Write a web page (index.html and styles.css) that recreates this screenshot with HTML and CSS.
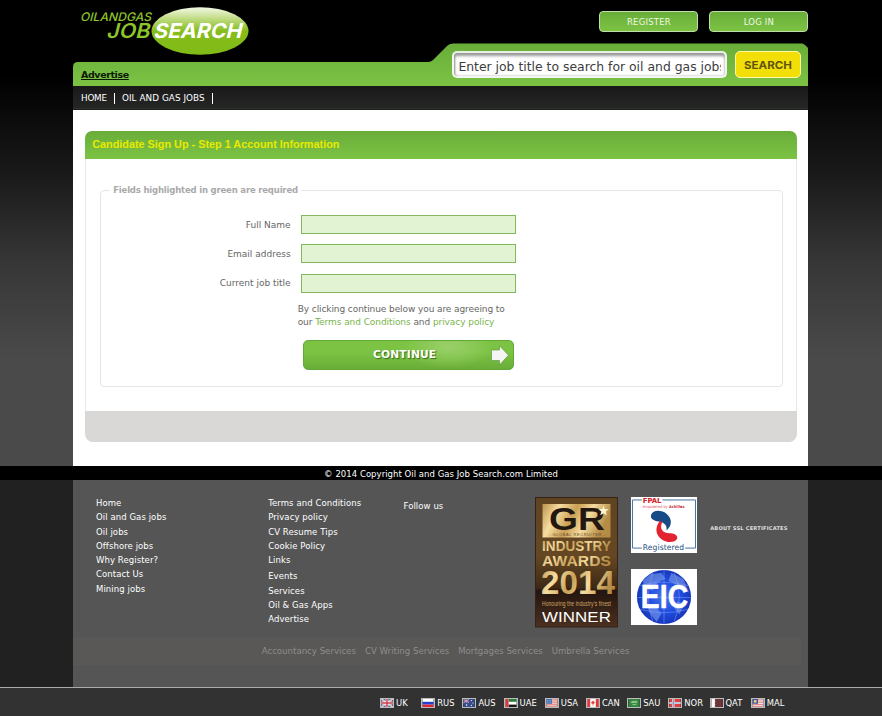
FILE: index.html
```html
<!DOCTYPE html>
<html lang="en">
<head>
<meta charset="utf-8">
<title>Candidate Sign Up - Oil and Gas Job Search</title>
<link rel="stylesheet" href="styles.css">
</head>
<body>
<div class="upper">
  <div class="wrap">
    <header class="header">
      <svg class="header-shape" viewBox="0 0 735 110" width="735" height="110">
        <defs>
          <linearGradient id="hg" x1="0" y1="0" x2="0" y2="1"><stop offset="0" stop-color="#69ad39"/><stop offset="1" stop-color="#7cc344"/></linearGradient>
          <linearGradient id="nav" x1="0" y1="0" x2="0" y2="1"><stop offset="0" stop-color="#191919"/><stop offset="1" stop-color="#252725"/></linearGradient>
        </defs>
        <path d="M0 86V67Q0 62 5 62H355Q358 62 360 60L374 46Q376 43.500 380 43.500H729Q731 43.500 735 48V86Z" fill="url(#hg)"/>
        <rect y="86" width="735" height="23" fill="url(#nav)"/>
        <rect y="108.500" width="735" height="1" fill="#3a3a3a"/>
      </svg>
      <div class="top">
        <svg class="logo" viewBox="0 0 180 60" width="180" height="60">
          <defs><linearGradient id="lg" x1="0" y1="0" x2="0" y2="1"><stop offset="0" stop-color="#f3f8e6"/><stop offset=".15" stop-color="#d3e7a8"/><stop offset=".5" stop-color="#86bd1c"/><stop offset="1" stop-color="#80bb16"/></linearGradient></defs>
          <ellipse cx="127" cy="31" rx="48.500" ry="23.700" fill="url(#lg)"/>
          <g class="logo-text">
            <text class="small" transform="translate(7 20.500) skewX(-14)" font-size="11.800" textLength="71" lengthAdjust="spacingAndGlyphs">OILANDGAS</text>
            <text transform="translate(33 38) skewX(-14)" font-size="20.500" textLength="43" lengthAdjust="spacingAndGlyphs">JOB</text>
            <text class="white" transform="translate(80 38) skewX(-14)" font-size="20.500" textLength="88" lengthAdjust="spacingAndGlyphs">SEARCH</text>
          </g>
        </svg>
        <div class="account"><a class="pill">REGISTER</a><a class="pill">LOG IN</a></div>
      </div>
      <div class="search-row">
        <a class="advertise">Advertise</a>
        <div class="search"><div class="query"><span>Enter job title to search for oil and gas jobs</span></div><a class="go"><svg width="66" height="26" viewBox="0 0 66 26"><text x="8" y="16.800" textLength="48" lengthAdjust="spacingAndGlyphs">SEARCH</text></svg></a></div>
      </div>
      <nav class="nav"><a>HOME</a><a>OIL AND GAS JOBS</a></nav>
    </header>
    <main class="main">
      <section class="panel">
        <h1>Candidate Sign Up - Step 1 Account Information</h1>
        <div class="panel-body">
          <fieldset>
            <legend>Fields highlighted in green are required</legend>
            <label><span>Full Name</span><input></label>
            <label><span>Email address</span><input></label>
            <label><span>Current job title</span><input></label>
            <p>By clicking continue below you are agreeing to<br><span class="line2">our <a>Terms and Conditions</a> and <a>privacy policy</a></span></p>
            <button type="button">CONTINUE<svg width="18" height="21" viewBox="0 0 18 21"><path d="M.5 5H8.500V.8L17.500 10.200 8.500 20V15.500H.5Z" fill="#f5f5f5" stroke="#558f31" stroke-width=".6"/></svg></button>
          </fieldset>
        </div>
        <div class="panel-foot"></div>
      </section>
    </main>
  </div>
</div>
<div class="copyright">© 2014 Copyright Oil and Gas Job Search.com Limited</div>
<footer class="footer">
  <div class="foot">
    <div class="columns">
      <ul class="first"><li>Home</li><li>Oil and Gas jobs</li><li>Oil jobs</li><li>Offshore jobs</li><li>Why Register?</li><li>Contact Us</li><li>Mining jobs</li></ul>
      <ul class="second"><li>Terms and Conditions</li><li>Privacy policy</li><li>CV Resume Tips</li><li>Cookie Policy</li><li>Links</li><li class="gap">Events</li><li>Services</li><li>Oil &amp; Gas Apps</li><li>Advertise</li></ul>
      <div class="follow">Follow us</div>
      <svg class="award" width="83" height="131" viewBox="0 0 83 131">
        <defs>
          <linearGradient id="ab" x1="0" y1="0" x2="0" y2="1"><stop offset="0" stop-color="#604321"/><stop offset=".45" stop-color="#654823"/><stop offset=".7" stop-color="#3e2815"/><stop offset=".72" stop-color="#24150f"/><stop offset="1" stop-color="#4b3020"/></linearGradient>
          <linearGradient id="gold" x1="0" y1="0" x2="1" y2=".25"><stop offset="0" stop-color="#bd934e"/><stop offset=".25" stop-color="#f6dda0"/><stop offset=".5" stop-color="#c99f55"/><stop offset=".72" stop-color="#f5dc9f"/><stop offset="1" stop-color="#b58c46"/></linearGradient>
        </defs>
        <rect x=".5" y=".5" width="82" height="129.500" fill="url(#ab)" stroke="#342317"/>
        <rect x="7.500" y="7" width="68" height="33.500" fill="url(#gold)"/>
        <g font-family="Liberation Sans">
          <text x="14" y="33" font-size="31" font-weight="bold" fill="#23180f" textLength="56" lengthAdjust="spacingAndGlyphs">GR</text>
          <path d="M68.500 8.500l1.200 3.500 4 .2-3 2.300 1 3.800-3.200-2.100-3.300 2.100 1.100-3.800-3-2.300 4-.2z" fill="#fff3cc"/>
          <text x="14" y="39" font-size="4" fill="#654a27" textLength="56">- GLOBAL RECRUITER -</text>
          <text x="7" y="54" font-size="14" font-weight="bold" fill="url(#gold)" textLength="69" lengthAdjust="spacingAndGlyphs">INDUSTRY</text>
          <text x="7" y="68.500" font-size="15" font-weight="bold" fill="url(#gold)" textLength="69" lengthAdjust="spacingAndGlyphs">AWARDS</text>
          <text x="6" y="97" font-size="33" font-weight="bold" fill="url(#gold)" textLength="74" lengthAdjust="spacingAndGlyphs">2014</text>
          <text x="7" y="109" font-size="6.500" fill="#d3a764" textLength="69" lengthAdjust="spacingAndGlyphs">Honouring the industry's finest</text>
          <text x="7" y="125" font-size="14" fill="#fff" textLength="69" lengthAdjust="spacingAndGlyphs">WINNER</text>
        </g>
      </svg>
      <div class="badges">
        <svg width="66" height="56" viewBox="0 0 67 57" preserveAspectRatio="none">
          <rect width="67" height="57" fill="#fff"/>
          <path d="M11 3H1.500V52H11M32 3H65.500V52H55" fill="none" stroke="#41719c"/>
          <g font-family="DejaVu Sans">
            <text x="12" y="5.800" font-size="7" font-weight="bold" fill="#d02028" textLength="19">FPAL</text>
            <text x="12" y="11.500" font-size="4" fill="#dc4c51" textLength="25" lengthAdjust="spacingAndGlyphs">empowered by</text>
            <text x="38.500" y="11.500" font-size="4" font-weight="bold" fill="#c92932" textLength="16" lengthAdjust="spacingAndGlyphs">Achilles</text>
            <text x="12" y="54" font-size="8" fill="#1e5183" textLength="42" lengthAdjust="spacingAndGlyphs">Registered</text>
          </g>
          <path d="M20.500 18C22 13 31 13 36 17C42 22 42 29 36 34C37 29 34 26 28 25C23 24 19 22 20.500 18Z" fill="#184a86"/>
          <path d="M29 25C24 31 25 39 31 43C36 47 45 47 47 42C47 38 43 37 39 37C33 37 28 33 32 25Z" fill="#e22330"/>
        </svg>
        <svg width="66" height="56" viewBox="0 0 67 57" preserveAspectRatio="none">
          <defs><radialGradient id="globe"><stop offset="0" stop-color="#4a74e6"/><stop offset=".6" stop-color="#1f4ce0"/><stop offset="1" stop-color="#1737bb"/></radialGradient></defs>
          <rect width="67" height="57" fill="#fff"/><circle cx="33.500" cy="28.500" r="27.500" fill="url(#globe)"/>
          <path d="M12 12L20 5 31 4 35 10 27 14 22 22 14 20ZM41 4L53 10 59 24 50 20 44 15 38 12ZM15 36L24 38 31 45 26 54 20 46ZM47 33L55 35 49 46 44 40Z" fill="#86a5ec" opacity=".55"/>
          <path d="M9 17Q33 10 58 17M6 29H61M9 41Q33 48 58 41M22 4Q13 28 22 53M44 4Q54 28 44 53M33.500 1V56" fill="none" stroke="#83a5f2" stroke-width=".5"/>
          <text x="10" y="40" font-family="Liberation Sans" font-size="33" font-weight="bold" fill="#fff" stroke="#fff" stroke-width=".5" textLength="48" lengthAdjust="spacingAndGlyphs">EIC</text>
        </svg>
      </div>
      <div class="ssl">ABOUT SSL CERTIFICATES</div>
    </div>
    <div class="services"><a>Accountancy Services</a><a>CV Writing Services</a><a>Mortgages Services</a><a>Umbrella Services</a></div>
  </div>
</footer>
<div class="countries">
  <a><svg viewBox="0 0 14 10"><path fill="#56629b" d="M0 0h14v10H0z"/><path d="M0 0l14 10M14 0L0 10" stroke="#eee" stroke-width="2"/><path d="M0 0l14 10M14 0L0 10" stroke="#d5808b" stroke-width=".7"/><path d="M7 0v10M0 5h14" stroke="#eee" stroke-width="3.500"/><path d="M7 0v10M0 5h14" stroke="#cf3e4b" stroke-width="1.800"/></svg>UK</a>
  <a><svg viewBox="0 0 14 10"><path fill="#fff" d="M0 0h14v10H0z"/><path fill="#2440cb" d="M0 3.500h14V7H0z"/><path fill="#dc2636" d="M0 7h14v3H0z"/></svg>RUS</a>
  <a><svg viewBox="0 0 14 10"><path fill="#354b8c" d="M0 0h14v10H0z"/><path d="M0 0l7 5M7 0L0 5M3.500 0v5M0 2.500h7" stroke="#e4a4b0"/><g fill="#fff"><circle cx="4" cy="7.500" r="1"/><circle cx="10" cy="2" r=".7"/><circle cx="12" cy="5" r=".7"/><circle cx="10" cy="8" r=".7"/></g></svg>AUS</a>
  <a><svg viewBox="0 0 14 10"><path fill="#fff" d="M0 0h14v10H0z"/><path fill="#23803c" d="M4 0h10v3.500H4z"/><path fill="#171717" d="M4 7h10v3H4z"/><path fill="#d53b42" d="M0 0h4v10H0z"/></svg>UAE</a>
  <a><svg viewBox="0 0 14 10"><path fill="#efc0bd" d="M0 0h14v10H0z"/><path d="M0 1h14M0 4h14M0 7h14M0 9.500h14" stroke="#d48482"/><path fill="#4770b5" d="M0 0h7v6H0z"/><path d="M1 2h5M1 4h5" stroke="#aac0e4" stroke-dasharray="1 1"/></svg>USA</a>
  <a><svg viewBox="0 0 14 10"><path fill="#fff" d="M0 0h14v10H0z"/><path fill="#df3b3d" d="M0 0h3.500v10H0zM10.500 0H14v10h-3.500zM7 1.500l.8 1.500 1.700 1-1.300 2H7.400v2.500h-.8V6H5.500L4.500 4l1.700-1z"/></svg>CAN</a>
  <a><svg viewBox="0 0 14 10"><path fill="#34863c" d="M0 0h14v10H0z"/><path d="M4 3h7M3 4.500h8M5 7h5" stroke="#b4d2ae"/></svg>SAU</a>
  <a><svg viewBox="0 0 14 10"><path fill="#dc4244" d="M0 0h14v10H0z"/><path d="M5 0v10M0 5h14" stroke="#fff" stroke-width="2.600"/><path d="M5 0v10M0 5h14" stroke="#6878a6" stroke-width="1"/></svg>NOR</a>
  <a><svg viewBox="0 0 14 10"><path fill="#6d3536" d="M0 0h14v10H0z"/><path fill="#fff" d="M0 0h4l1 1-1 1 1 1-1 1 1 1-1 1 1 1-1 1 1 1-1 1H0z"/></svg>QAT</a>
  <a><svg viewBox="0 0 14 10"><path fill="#eee0df" d="M0 0h14v10H0z"/><path d="M0 1h14M0 4h14M0 7h14M0 9.500h14" stroke="#d86c70"/><path fill="#46589b" d="M0 0h7v6H0z"/><circle cx="3.500" cy="3" r="1.800" fill="#ead375"/></svg>MAL</a>
</div>
</body>
</html>
```

FILE: styles.css
```css
* { box-sizing: border-box; }
body { margin: 0; width: 882px; height: 716px; overflow: hidden; background: #212121; font-family: "DejaVu Sans", sans-serif; font-size: 9px; color: #fff; }
.upper { height: 466px; background: linear-gradient(#000 0, #000 75px, #191919 172px, #363636 260px, #4a4a4a 360px, #4a4a4a); }
.wrap, .foot { width: 735px; margin: 0 0 0 73.4px; }
.header { position: relative; height: 110px; background: #000; }
.header-shape { position: absolute; top: 0; left: 0; }
.top, .search-row, .nav { position: relative; }
.top { height: 43px; display: flex; justify-content: space-between; }
.logo { flex: none; }
.logo-text { font-family: Inter, sans-serif; font-weight: 600; fill: #8dc52a; }
.logo-text .small { font-weight: 500; }
.logo-text .white { font-weight: 700; fill: #fff; }
.account { display: flex; gap: 11px; padding-top: 11px; }
.pill { width: 99px; height: 21px; border: 1px solid #bfdea8; border-radius: 4px; background: linear-gradient(#69ad39, #7cc344); font-size: 8.5px; letter-spacing: .2px; line-height: 20px; text-align: center; color: #edf8e5; }
.search-row { height: 43px; display: flex; justify-content: space-between; }
.advertise { padding: 26px 0 0 7.6px; font-weight: 700; font-size: 9.5px; letter-spacing: -.4px; line-height: 12px; text-decoration: underline; color: #0b1a04; }
.search { display: flex; gap: 7.5px; padding: 8px 7.5px 0 0; }
.query { width: 275px; height: 27px; padding: 0 4px 0 4px; border: 2px solid #f3f5f2; border-top-color: #e8f0e2; border-radius: 5px; background: #fff; box-shadow: inset 0 3px 3px #999, inset 1px 0 2px #999; font-size: 12.4px; line-height: 28px; color: #3d3d3d; }
.query span { display: block; overflow: hidden; white-space: nowrap; }
.go { width: 66px; height: 27px; border: 1px solid #fff7a5; border-radius: 5px; background: #f3df08; }
.go svg { display: block; font-family: Inter, sans-serif; font-size: 11px; font-weight: 700; fill: #5e560f; }
.nav { display: flex; padding: 7px 0 0 7.6px; font-size: 8.8px; line-height: 11px; }
.nav a { padding-right: 7px; margin-right: 7px; border-right: 1px solid #fff; letter-spacing: -.2px; }
.nav a + a { letter-spacing: .08px; }
.main { height: 356px; padding: 20.500px 11.500px 0 11.300px; background: #fff; }
.panel { height: 312px; }
h1 { height: 28.500px; margin: 0; padding-left: 7.500px; border-radius: 7px 7px 0 0; background: linear-gradient(#69ad39, #7cc344); font: 700 10.850px/27px "Liberation Sans", sans-serif; color: #e9e900; }
.panel-body { height: 252px; padding: 24px 12.500px 0 14.500px; border: solid #e8e8e8; border-width: 0 1px; }
.panel-foot { height: 31px; border-radius: 0 0 8px 8px; background: #d9d8d7; }
fieldset { margin: 0; padding: 17px 0 0; height: 204px; border: 1px solid #e5e5e5; border-radius: 4px; }
legend { margin-left: 9px; padding: 0 3px; font-weight: 700; font-size: 8.500px; letter-spacing: -.18px; line-height: 15px; color: #aaa; }
label { display: flex; align-items: center; gap: 10px; height: 19px; margin-bottom: 10.300px; color: #666; }
label span { width: 189.400px; text-align: right; }
input { width: 215px; height: 19px; border: 1px solid #84b860; background: #e1f3d3; }
fieldset p { margin: 2px 0 0 196.500px; line-height: 13.500px; letter-spacing: -.09px; color: #666; }
fieldset p a { color: #7ab54d; }
.line2 { letter-spacing: -.07px; }
button { position: relative; display: block; width: 211px; height: 30px; margin: 10px 0 0 202px; padding: 0 8px 0 0; border: 1px solid #60a837; border-radius: 5px; background: radial-gradient(ellipse 45px 22px at 69% 20%, #9ad069, transparent), linear-gradient(#7cc344 40%, #69ad37); font: 700 10.700px "DejaVu Sans", sans-serif; letter-spacing: .15px; color: #fff; text-shadow: 1px 1px 1px #356b16; }
button svg { position: absolute; right: 4px; top: 4px; }
.copyright { height: 14px; background: #000; text-align: center; font-size: 8.500px; letter-spacing: .04px; line-height: 16px; }
.footer { height: 207px; background: #212121; }
.foot { height: 207px; background: #555; padding-top: 16px; }
.columns { display: flex; height: 141px; font-size: 8.500px; letter-spacing: .08px; line-height: 14.250px; }
ul { list-style: none; margin: 0; padding: 0; }
.first { width: 172.200px; margin-left: 22.600px; }
.second { width: 135.300px; }
.gap { margin-top: 2px; }
.follow { width: 131.500px; padding-top: 3px; }
.award { margin-top: .500px; }
.badges { display: flex; flex-direction: column; gap: 16px; margin-left: 12.700px; padding-top: .700px; width: 79.500px; }
.ssl { padding-top: 25px; font-weight: 700; font-size: 5.200px; letter-spacing: .13px; white-space: nowrap; color: #ddd; }
.services { width: 728px; height: 28px; display: flex; gap: 9px; padding-left: 188.300px; background: #5a5757; line-height: 29px; font-size: 8.600px; color: #8f8c8c; }
.countries { display: flex; height: 29px; padding: 2px 0 0 380px; border-top: 1px solid #aaa; background: #323232; font-size: 8.400px; line-height: 26px; }
.countries a { width: 41.200px; display: flex; align-items: center; gap: 2px; }
.countries svg { width: 14px; height: 10px; flex: none; border: 1px solid #bbb; }
```
